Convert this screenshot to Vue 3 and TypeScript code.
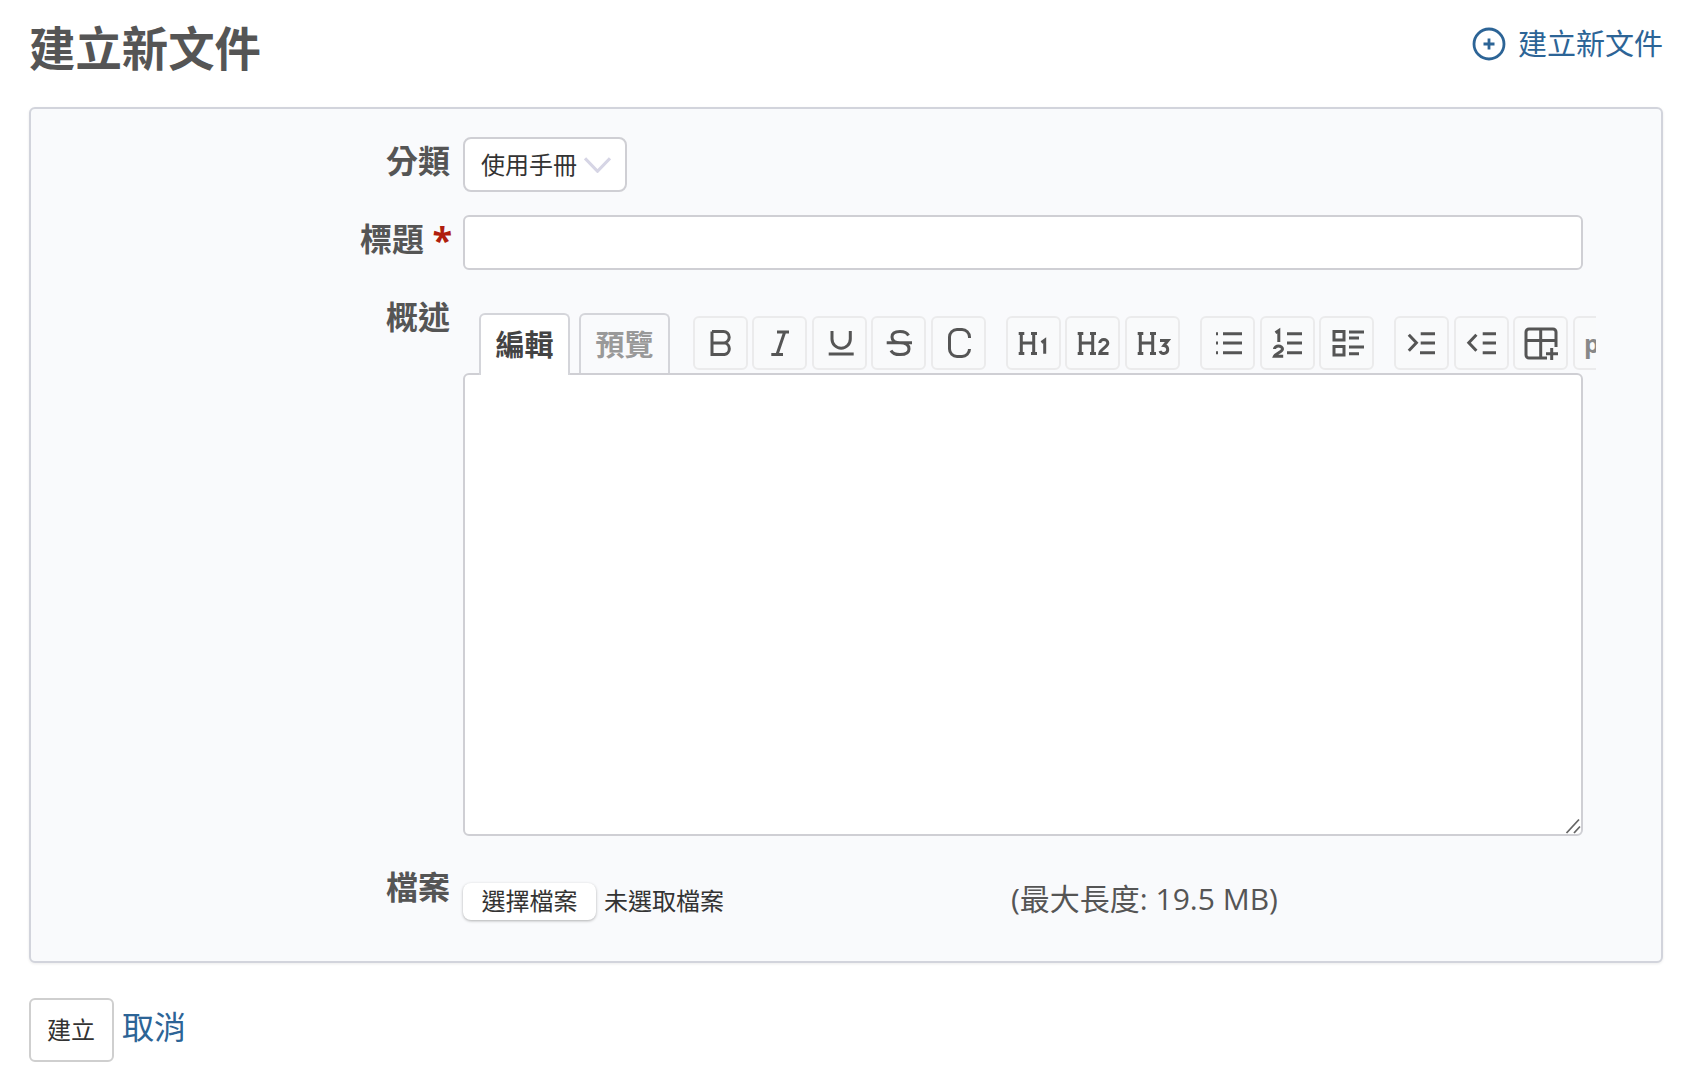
<script setup lang="ts">
interface Tool { name: string; d: string }

const H = 'M14.3 17.5V37.5M26.7 17.5V37.5M14.3 27H26.7M11.7 17.5H17.3M24 17.5H30M11.7 37.5H17.3M24 37.5H30'

const groups: Tool[][] = [
  [
    { name: 'bold', d: 'M18 15.5V38.5H30.5a5.9 5.9 0 0 0 0-11.6H18M18 15.5H29.5a5.7 5.7 0 0 1 0 11.4' },
    { name: 'italic', d: 'M24 16.1H36M18.3 38.4H30M31.7 16.1L24 38.4' },
    { name: 'underline', d: 'M19 15V23a9.15 9.15 0 0 0 18.3 0V15M15.7 38H40.7' },
    { name: 'strike', d: 'M36.5 19.5Q34.5 15.6 28 15.6Q20 15.6 20 21Q20 26.7 28 26.7Q37 26.7 37 33Q37 38.6 28 38.6Q21 38.6 19 34.5M14.7 26.7H40' },
    { name: 'code', d: 'M37.5 22V21a7.5 7.5 0 0 0-7.5-7.5H25a7.5 7.5 0 0 0-7.5 7.5V33a7.5 7.5 0 0 0 7.5 7.5H30a7.5 7.5 0 0 0 7.5-7.5' }
  ],
  [
    { name: 'h1', d: H + 'M34.5 26.5L37.7 24.2V37.7' },
    { name: 'h2', d: H + 'M33.8 27a4 3.4 0 0 1 8 0c0 4-7.4 6-8 10.4H42.5' },
    { name: 'h3', d: H + 'M34 24.5H42L38 29.5a4 4 0 1 1-4 5.5' }
  ],
  [
    { name: 'ul', d: 'M22 17.7H41M22 27H41M22 36.7H41M15 17.7H17M15 27H17M15 36.7H17' },
    { name: 'ol', d: 'M26 17.7H41M26 27H41M26 36.7H41M14.5 16.8L17.8 14.6V26M13.5 33a4 3 0 0 1 8 0c0 3-6.5 4-8 7.2H22.2' },
    { name: 'task', d: 'M14 15.4H24V24H14ZM14 30.4H24V39H14ZM29 16H44M29 22H39M29 31H44M29 37.7H39' }
  ],
  [
    { name: 'indent', d: 'M13.8 18.8L21.4 26.8L13.8 34.8M25.7 17.7H40M25.7 27H40M25 36.7H40' },
    { name: 'outdent', d: 'M21.4 18.8L13.8 26.8L21.4 34.8M27.7 17.7H41M27.7 27H41M27.7 36.7H41' },
    { name: 'table', d: 'M33 42H15a3 3 0 0 1-3-3V16a3 3 0 0 1 3-3H39a3 3 0 0 1 3 3V31M12 24.4H42M26.7 13V42M37.7 32V44M32 37.7H44' }
  ]
]
</script>

<template>
  <div class="page">
    <header class="head">
      <h1 class="title">建立新文件</h1>
      <a class="new-link">
        <svg class="plus" viewBox="0 0 34 34" aria-hidden="true">
          <circle cx="17" cy="17" r="15" />
          <path d="M17 11.5V22.5M11.5 17H22.5" />
        </svg>
        <span class="new-text">建立新文件</span>
      </a>
    </header>

    <form class="panel" @submit.prevent>
      <div class="row">
        <label class="label">分類</label>
        <div class="control">
          <div class="select">
            <span class="select-text">使用手冊</span>
            <svg class="chev" viewBox="0 0 26 15" aria-hidden="true"><path d="M1 1L13 13.5L25 1" /></svg>
          </div>
        </div>
      </div>

      <div class="row row-title">
        <label class="label">標題 <em class="req">*</em></label>
        <div class="control"><input class="input" type="text" /></div>
      </div>

      <div class="row row-desc">
        <label class="label">概述</label>
        <div class="control">
          <div class="editor-top">
            <div class="tabs">
              <span class="tab active">編輯</span>
              <span class="tab">預覽</span>
            </div>
            <div class="toolbar">
              <div v-for="(group, i) in groups" :key="i" class="group">
                <button v-for="tool in group" :key="tool.name" type="button" class="tool">
                  <svg viewBox="0 0 54 54" aria-hidden="true"><path :d="tool.d" /></svg>
                </button>
              </div>
              <button type="button" class="tool tool-text">p</button>
            </div>
          </div>
          <div class="area-wrap">
            <textarea class="area"></textarea>
            <svg class="grip" viewBox="0 0 16 16" aria-hidden="true"><path d="M1.5 15L14 1.5M9 15L15 8.5" /></svg>
          </div>
        </div>
      </div>

      <div class="row row-file">
        <label class="label">檔案</label>
        <div class="control file">
          <div class="file-input">
            <button type="button" class="file-btn">選擇檔案</button>
            <span class="file-none">未選取檔案</span>
          </div>
          <span class="hint">(最大長度: 19.5 MB)</span>
        </div>
      </div>
    </form>

    <footer class="actions">
      <button type="button" class="submit">建立</button>
      <a class="cancel">取消</a>
    </footer>
  </div>
</template>

<style scoped>
.page {
  box-sizing: border-box;
  width: 1698px;
  height: 1086px;
  padding: 0 35px 0 29px;
  overflow: hidden;
  background: #fff;
  color: #555;
  font-family: "Open Sans", "Noto Sans CJK TC", sans-serif;
}
.head {
  display: flex;
  justify-content: space-between;
  height: 107px;
}
.title {
  margin: 17px 0 0;
  font-size: 46.4px;
  line-height: 62px;
  font-weight: 700;
  color: #555;
}
.new-link {
  display: flex;
  align-items: center;
  gap: 12px;
  height: 34px;
  margin-top: 27px;
  color: #2c6496;
  font-size: 29px;
  line-height: 34px;
}
.new-text {
  padding-bottom: 1px;
}
.plus {
  width: 34px;
  height: 34px;
  fill: none;
  stroke: #2c6496;
  stroke-width: 2.8;
}
.panel {
  box-sizing: border-box;
  height: 856px;
  padding: 28px 0 0;
  background: #f9fafc;
  border: 2px solid #d2d4dc;
  border-radius: 6px;
  box-shadow: 0 1px 3px rgba(0, 0, 0, 0.08);
}
.row {
  display: flex;
}
.row-title {
  margin-top: 23px;
}
.row-desc {
  margin-top: 22px;
}
.row-file {
  margin-top: 27px;
}
.label {
  box-sizing: border-box;
  flex: 0 0 419px;
  padding-top: 6px;
  text-align: right;
  font-size: 32px;
  line-height: 36px;
  font-weight: 700;
  color: #555;
}
.row-desc .label {
  padding-top: 7px;
}
.req {
  margin-right: -2px;
  font-style: normal;
  font-size: 36px;
  line-height: 0;
  vertical-align: -2px;
  color: #b01e0e;
}
.control {
  margin-left: 13px;
  width: 1120px;
}
.select {
  box-sizing: border-box;
  display: flex;
  align-items: center;
  width: 164px;
  height: 55px;
  padding-left: 16px;
  background: #fff;
  border: 2px solid #cfcfd4;
  border-radius: 8px;
  color: #333;
  font-size: 24px;
}
.select-text {
  padding-bottom: 2px;
}
.chev {
  width: 27px;
  height: 16px;
  margin-left: 7px;
  fill: none;
  stroke: #d6d5e5;
  stroke-width: 3;
}
.input {
  box-sizing: border-box;
  display: block;
  width: 100%;
  height: 55px;
  background: #fff;
  border: 2px solid #cfcfd4;
  border-radius: 6px;
  outline: none;
}
.row-desc .control {
  padding-top: 21px;
}
.editor-top {
  display: flex;
  align-items: flex-start;
  height: 59.5px;
  margin-right: -13px;
  padding-left: 16px;
}
.tabs {
  display: flex;
  gap: 9px;
  flex: none;
}
.tab {
  box-sizing: border-box;
  position: relative;
  z-index: 1;
  display: block;
  width: 91px;
  height: 60px;
  padding-top: 10px;
  text-align: center;
  background: #f9fafc;
  border: 2px solid #d4d5da;
  border-bottom: none;
  border-radius: 6px 6px 0 0;
  color: #999;
  font-size: 29px;
  line-height: 40px;
  font-weight: 700;
}
.tab.active {
  height: 62px;
  background: #fff;
  color: #444;
}
.toolbar {
  display: flex;
  flex: 1 1 0;
  min-width: 0;
  gap: 20px;
  margin-left: 22.5px;
  padding-top: 2.5px;
  overflow: hidden;
}
.group {
  display: flex;
  flex: none;
  gap: 4.6px;
}
.tool {
  box-sizing: border-box;
  flex: none;
  display: block;
  width: 55px;
  height: 54px;
  padding: 0;
  background: #f9fafb;
  border: 2px solid #ebebec;
  border-radius: 6px;
}
.tool svg {
  display: block;
  width: 54px;
  height: 54px;
  margin: -2px -2px -2px -1px;
  fill: none;
  stroke: #555;
  stroke-width: 3;
}
.tool-text {
  padding-left: 9px;
  margin-left: -15.4px;
  text-align: left;
  font-family: "Open Sans", sans-serif;
  font-size: 25px;
  font-weight: 700;
  color: #888;
}
.area-wrap {
  position: relative;
}
.area {
  box-sizing: border-box;
  display: block;
  width: 1120px;
  height: 463.5px;
  background: #fff;
  border: 2px solid #cfcfd4;
  border-radius: 6px;
  outline: none;
  resize: none;
}
.grip {
  position: absolute;
  right: 2px;
  bottom: 2px;
  width: 16px;
  height: 16px;
  fill: none;
  stroke: #666;
  stroke-width: 1.8;
  pointer-events: none;
}
.file {
  display: flex;
  padding-top: 20px;
}
.file-input {
  display: flex;
  align-items: center;
  flex: 0 0 548px;
  height: 37px;
}
.file-btn {
  box-sizing: border-box;
  width: 133px;
  height: 37px;
  padding: 0 0 2px;
  background: #fff;
  border: none;
  border-radius: 8px;
  box-shadow: 0 1px 3px rgba(0, 0, 0, 0.3);
  color: #333;
  font-family: inherit;
  font-size: 24px;
  line-height: 35px;
}
.file-none {
  margin-left: 8px;
  padding-bottom: 4px;
  color: #333;
  font-size: 24px;
}
.hint {
  font-size: 30px;
  line-height: 32px;
  color: #555;
}
.actions {
  display: flex;
  align-items: center;
  gap: 8px;
  margin-top: 35px;
}
.submit {
  box-sizing: border-box;
  width: 85px;
  height: 64px;
  padding: 0 1px 3px 0;
  background: #fff;
  border: 2px solid #cfcfcf;
  border-radius: 6px;
  color: #333;
  font-family: inherit;
  font-size: 24px;
}
.cancel {
  padding-bottom: 6px;
  color: #2c6496;
  font-size: 32px;
  line-height: 40px;
}
</style>

<style>
html,
body {
  margin: 0;
  background: #fff;
}
</style>
